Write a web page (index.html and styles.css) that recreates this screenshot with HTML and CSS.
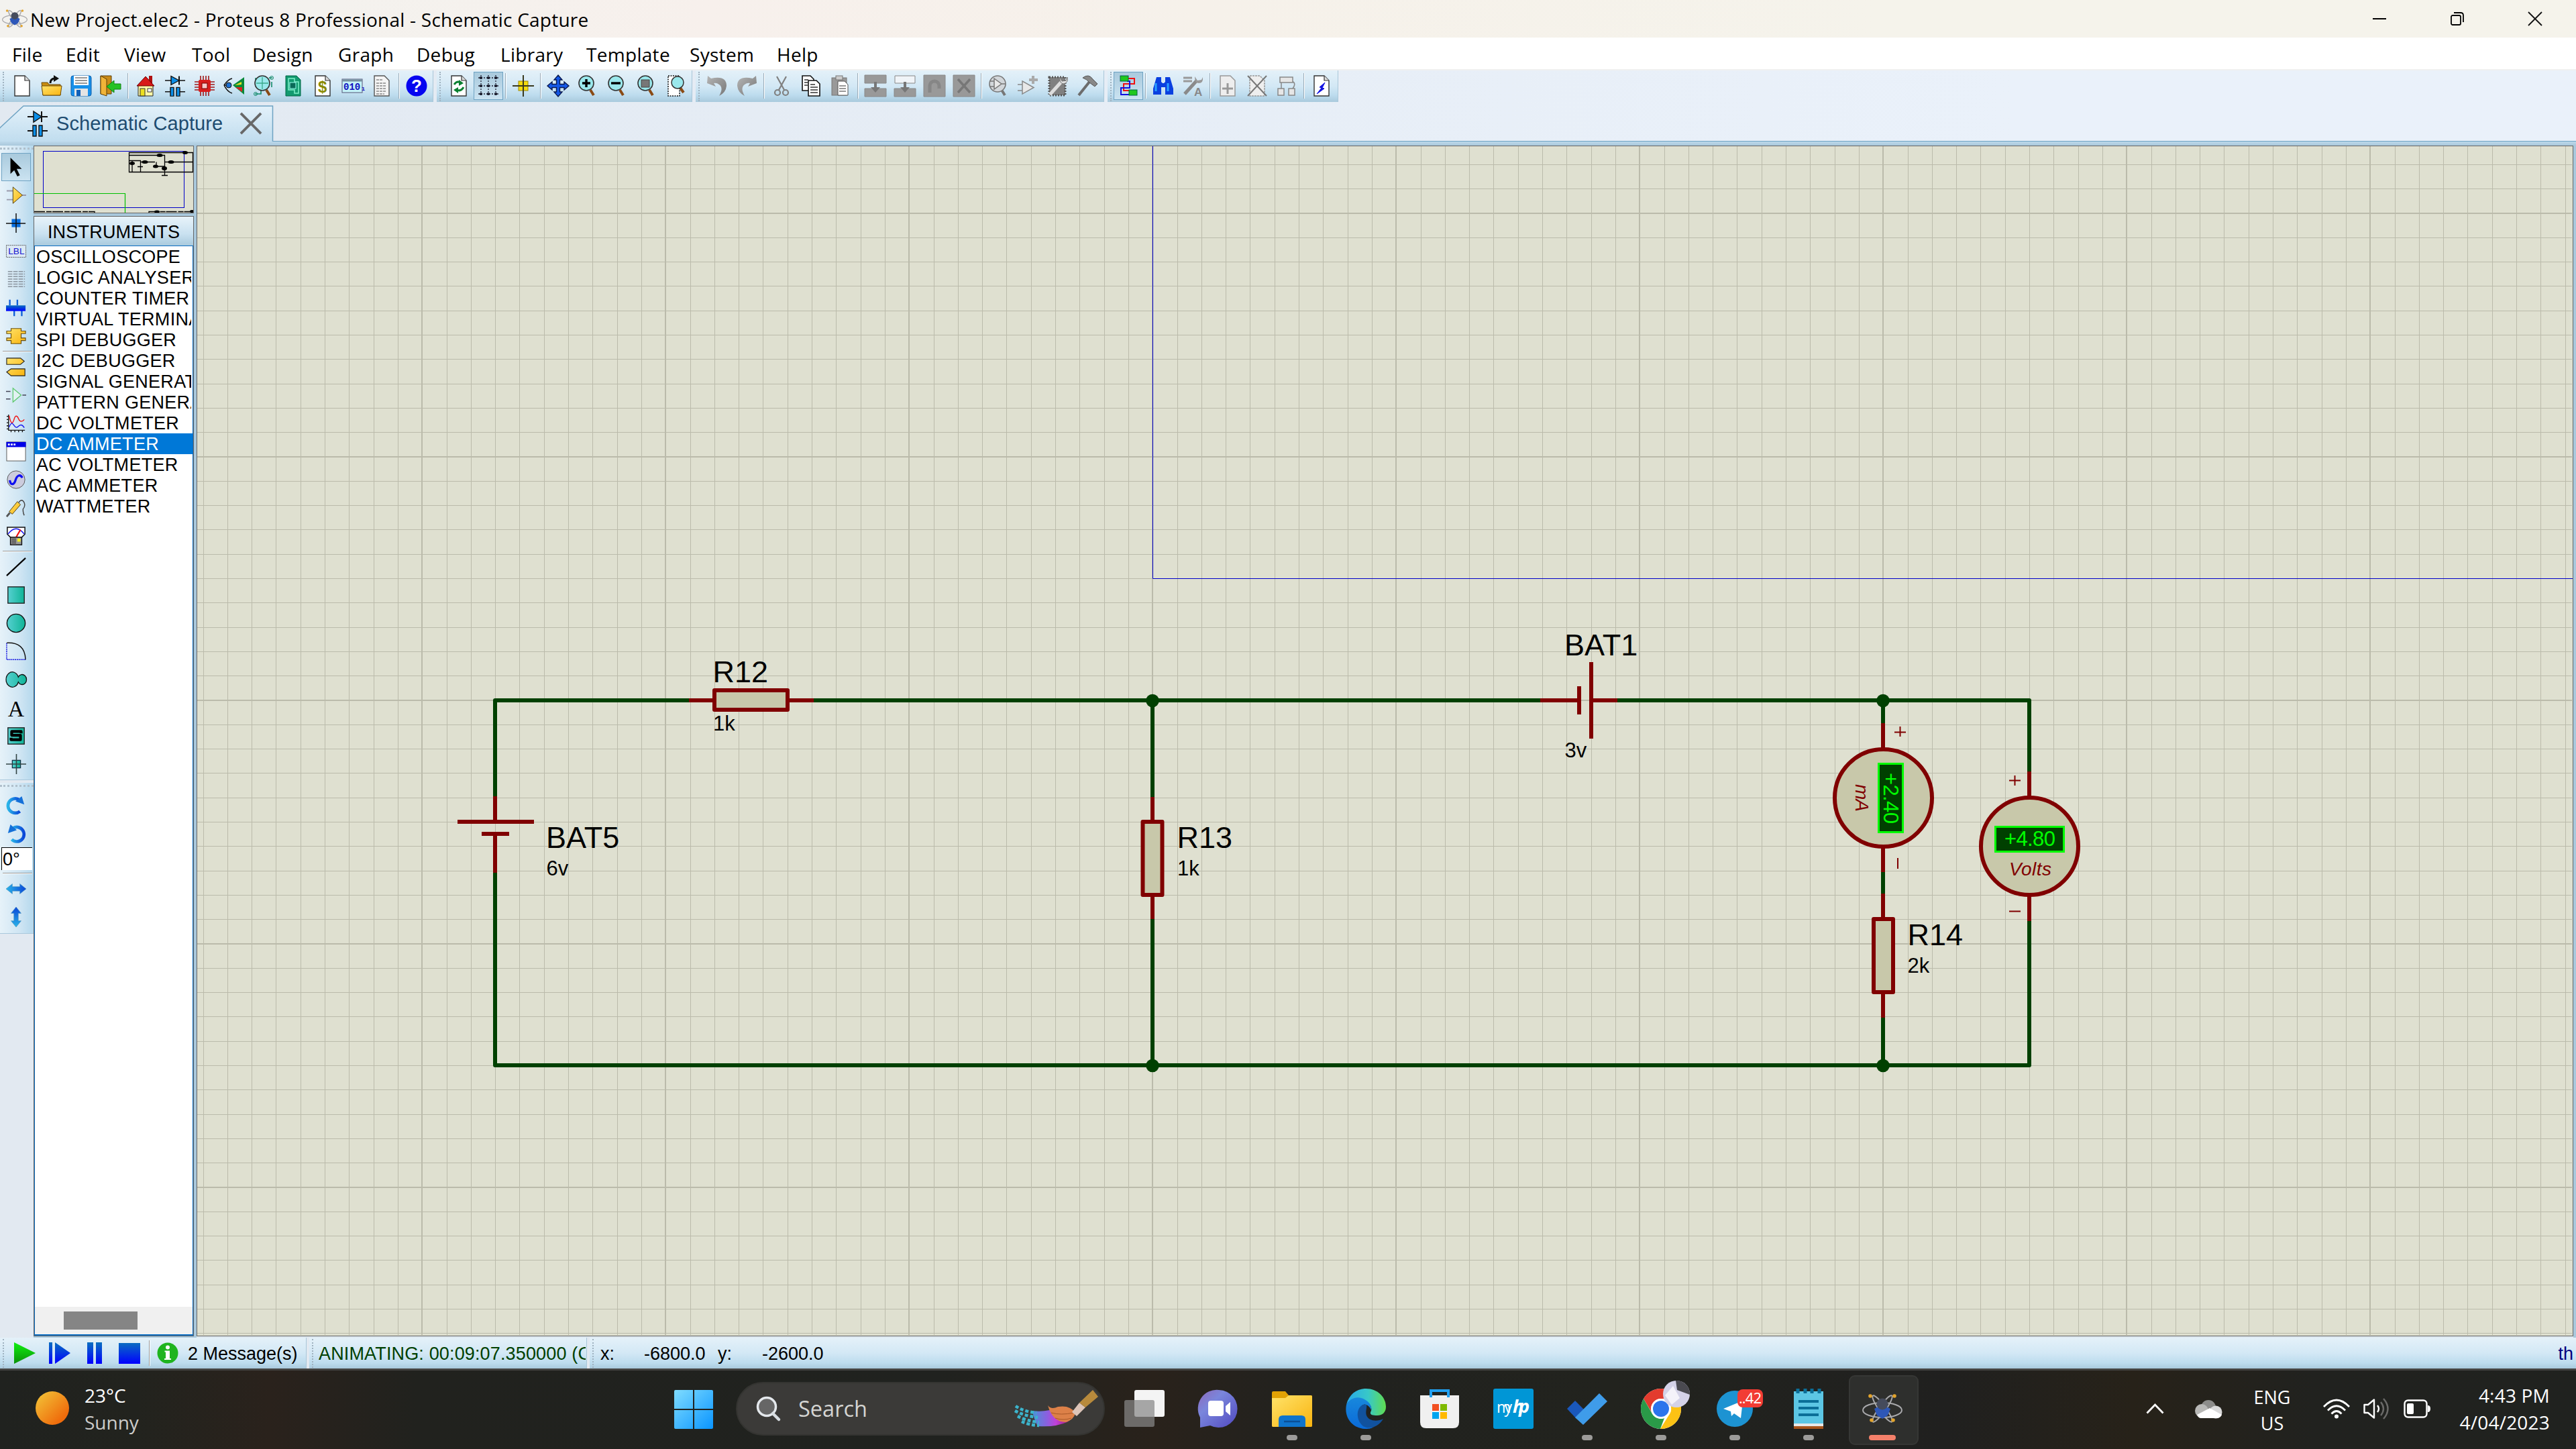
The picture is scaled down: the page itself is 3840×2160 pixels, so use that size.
FILE: index.html
```html
<!DOCTYPE html>
<html lang="en">
<head>
<meta charset="utf-8">
<title>New Project.elec2 - Proteus 8 Professional - Schematic Capture</title>
<link rel="stylesheet" href="styles.css">
</head>
<body>
<svg class="defs" width="0" height="0" aria-hidden="true">
  <defs>
    <linearGradient id="teal"><stop offset="0" stop-color="#56d0d0"/><stop offset="1" stop-color="#0fb497"/></linearGradient>
    <linearGradient id="gold" x2="1" y2="1"><stop offset="0" stop-color="#ffe36a"/><stop offset="1" stop-color="#f9b410"/></linearGradient>
    <linearGradient id="bluev" x2="0" y2="1"><stop offset="0" stop-color="#0a6fc0"/><stop offset="1" stop-color="#0000ff"/></linearGradient>
    <linearGradient id="blueh"><stop offset="0" stop-color="#2ab4e8"/><stop offset="1" stop-color="#0a46d8"/></linearGradient>
    <linearGradient id="bluev2" x2="0" y2="1"><stop offset="0" stop-color="#0a46d8"/><stop offset="1" stop-color="#2ab4e8"/></linearGradient>
    <linearGradient id="greenv" x2="0" y2="1"><stop offset="0" stop-color="#10f010"/><stop offset="1" stop-color="#0a900a"/></linearGradient>
    <linearGradient id="sun" x2="1" y2="1"><stop offset=".1" stop-color="#f2bd34"/><stop offset=".8" stop-color="#ef6c0c"/></linearGradient>
    <linearGradient id="win" x2="1" y2="1"><stop offset="0" stop-color="#7fdcff"/><stop offset="1" stop-color="#0a95ff"/></linearGradient>
    <linearGradient id="graymetal" x2="1" y2="1"><stop offset="0" stop-color="#b5b5b5"/><stop offset="1" stop-color="#777"/></linearGradient>
    <symbol id="page" viewBox="0 0 32 32"><path d="M5 1H20L27 8V31H5Z" fill="#fff" stroke="#333" stroke-width="1.4"/><path d="M20 1V8H27" fill="#ddd" stroke="#333" stroke-width="1.2"/></symbol>
    <symbol id="lens" viewBox="0 0 32 32"><path d="M20 22 25 30" stroke="#8a4a14" stroke-width="4"/><circle cx="14" cy="12" r="11" fill="#9ae8ec" stroke="#333" stroke-width="1.6"/></symbol>
    <symbol id="diode" viewBox="0 0 32 40"><path d="M1 10H31M22 2V18M1 31H10M22 31H31" stroke="#111" stroke-width="2"/><path d="M10 2 22 10 10 18Z" fill="#0a8ee8" stroke="#111" stroke-width="1.5"/><path d="M9 23H14V39H9ZM18 23H23V39H18Z" fill="#0a8ee8" stroke="#111" stroke-width="1.4"/></symbol>
    <symbol id="atom" viewBox="0 0 60 44"><g fill="none" stroke="#a9a9ac" stroke-width="2"><ellipse cx="30" cy="24" rx="29" ry="11"/><ellipse cx="30" cy="22" rx="5" ry="24" transform="rotate(-36 30 22)"/><ellipse cx="30" cy="22" rx="5" ry="24" transform="rotate(36 30 22)"/></g><path d="M18 22 30 16 42 22 38 32 30 37 22 32Z" fill="#2d57b8"/><circle cx="30" cy="15" r="8.500" fill="#454b5c"/><g fill="#e3a42c"><circle cx="12" cy="3" r="2.800"/><circle cx="48" cy="3" r="2.800"/><circle cx="14" cy="39" r="2.800"/><circle cx="46" cy="39" r="2.800"/></g></symbol>
  </defs>
</svg>

<header class="titlebar">
  <svg class="app-icon" viewBox="0 0 60 44"><use href="#atom"/></svg>
  <span class="title">New Project.elec2 - Proteus 8 Professional - Schematic Capture</span>
  <div class="win-buttons">
    <svg viewBox="0 0 20 20"><path d="M0 10H20" stroke="#000" stroke-width="2"/></svg>
    <svg viewBox="0 0 20 20" fill="none" stroke="#000" stroke-width="1.8"><rect x="1" y="5" width="14" height="14" rx="2"/><path d="M5 1H15Q19 1 19 5V15"/></svg>
    <svg viewBox="0 0 20 20"><path d="M0 0 20 20M20 0 0 20" stroke="#111" stroke-width="1.8"/></svg>
  </div>
</header>

<nav class="menubar">
  <span>File</span><span>Edit</span><span>View</span><span>Tool</span><span>Design</span><span>Graph</span><span>Debug</span><span>Library</span><span>Template</span><span>System</span><span>Help</span>
</nav>

<div class="toolbars">
  <div class="group">
    <i class="cell"><svg viewBox="0 0 32 32"><use href="#page"/></svg></i>
    <i class="cell"><svg viewBox="0 0 32 32"><path d="M1 11H10L12 14H29V30H3Z" fill="#c98c10" stroke="#6b4b08"/><path d="M1 16H31L29 30H3Z" fill="url(#gold)" stroke="#6b4b08"/><path d="M14 12Q14 5 21 5" fill="none" stroke="#111" stroke-width="3"/><path d="M19 0 27 5 19 10Z" fill="#111"/></svg></i>
    <i class="cell"><svg viewBox="0 0 32 32"><rect x="1" y="1" width="30" height="30" rx="3" fill="#1890ea" stroke="#0a5ca8"/><rect x="5" y="1" width="22" height="14" fill="#fff"/><path d="M7 4H25M7 8H25M7 12H25" stroke="#333" stroke-width="1.2"/><rect x="6" y="20" width="20" height="11" fill="#e4e4e4"/><rect x="9" y="22" width="6" height="9" fill="#1060b8"/></svg></i>
    <i class="cell"><svg viewBox="0 0 32 32"><path d="M1 1H17V28H1Z" fill="#c98a18" stroke="#5c3f08"/><path d="M1 1 10 6V31L1 28Z" fill="#f0b438" stroke="#5c3f08"/><path d="M10 17 21 8V13H31V21H21V26Z" fill="#25c225" stroke="#128012"/></svg></i>
    <b class="sep"></b>
    <i class="cell"><svg viewBox="0 0 32 32"><path d="M5 15H27V31H5Z" fill="#fff9a8" stroke="#222"/><path d="M21 1H26V14H21Z" fill="#b01010"/><path d="M3 16 16 2 29 16Z" fill="#d81818" stroke="#600"/><rect x="8" y="20" width="7" height="11" fill="#ece020" stroke="#333"/><rect x="19" y="20" width="6" height="5" fill="#fff" stroke="#333"/></svg></i>
    <i class="cell"><svg viewBox="0 0 32 40" preserveAspectRatio="none"><use href="#diode"/></svg></i>
    <i class="cell"><svg viewBox="0 0 32 32"><path d="M10 1V31M14 1V31M18 1V31M22 1V31M1 10H31M1 14H31M1 18H31M1 22H31" stroke="#a01818" stroke-width="1.6"/><rect x="7" y="7" width="18" height="18" rx="2" fill="#d81c1c"/><rect x="12" y="12" width="8" height="8" fill="#f8c8c8" stroke="#700"/></svg></i>
    <i class="cell"><svg viewBox="0 0 32 32"><path d="M14 15 31 3V29Z" fill="#0a8a3a"/><path d="M17 15 27 10V14Z" fill="#e8e020"/><path d="M18 18 28 18 28 25Z" fill="#e02020"/><path d="M1 15Q7 6 13 5M1 15Q6 25 13 27M1 15H4" fill="none" stroke="#111" stroke-width="1.6"/><circle cx="8" cy="15" r="4" fill="#1b6ed0" stroke="#111"/></svg></i>
    <i class="cell"><svg viewBox="0 0 32 32"><path d="M3 28H12V20M24 4H29M4 4V10M28 10V18" stroke="#128a6a" stroke-width="1.6" fill="none"/><circle cx="4" cy="28" r="2.5" fill="none" stroke="#128a6a"/><circle cx="28" cy="4" r="2.5" fill="none" stroke="#128a6a"/><use href="#lens"/><path d="M5 12H23M14 3V21" stroke="#3aa88a" stroke-width="1.3"/></svg></i>
    <i class="cell"><svg viewBox="0 0 32 32"><path d="M5 1H21L27 7V31H5Z" fill="#129a70" stroke="#064"/><path d="M9 5H18V10H24V27H18V22H9Z" fill="none" stroke="#7ff0c8" stroke-width="1.5"/><rect x="11" y="11" width="9" height="9" fill="#0a6a58" stroke="#9fe"/></svg></i>
    <i class="cell"><svg viewBox="0 0 32 32"><use href="#page"/><text x="9" y="26" class="t-dollar">$</text></svg></i>
    <i class="cell"><svg viewBox="0 0 32 32"><rect x="1" y="6" width="30" height="20" fill="#c4f2f8" stroke="#557"/><path d="M1 8H31" stroke="#7890a0" stroke-width="3"/><text x="3" y="22" class="t-bits">010₁</text></svg></i>
    <i class="cell"><svg viewBox="0 0 32 32"><path d="M5 1H20L27 8V31H5Z" fill="#f4f4f4" stroke="#555" stroke-width="1.4"/><path d="M8 7H17M8 12H23M8 16H23M8 20H23M8 24H23M8 28H20" stroke="#888" stroke-width="1.6" stroke-dasharray="4 1"/></svg></i>
    <b class="sep"></b>
    <i class="cell"><svg viewBox="0 0 32 32"><circle cx="16" cy="16" r="15.5" fill="#0505f0"/><text x="16" y="25" class="t-help">?</text></svg></i>
  </div>
  <div class="group">
    <i class="cell"><svg viewBox="0 0 32 32"><use href="#page"/><path d="M9 14Q13 8 18 11M23 18Q19 25 13 22" fill="none" stroke="#0a8030" stroke-width="3"/><path d="M16 7 23 12 16 16ZM15 18 8 22 15 27Z" fill="#0a8030"/></svg></i>
    <i class="cell pressed"><svg viewBox="0 0 32 32"><path d="M1 4H31M1 16H31M1 28H31M5 0V32M16 0V32M27 0V32" stroke="#223" stroke-width="1.3" stroke-dasharray="2 2"/><path d="M3 4H7M14 4H18M25 4H29M3 16H7M14 16H18M25 16H29M3 28H7M14 28H18M25 28H29" stroke="#112" stroke-width="3"/></svg></i>
    <b class="sep"></b>
    <i class="cell"><svg viewBox="0 0 32 32"><rect x="9" y="9" width="14" height="14" fill="#f4dc10" stroke="#a08800"/><path d="M0 16H32M16 0V32" stroke="#3a3a20" stroke-width="2"/></svg></i>
    <b class="sep"></b>
    <i class="cell"><svg viewBox="0 0 32 32"><path d="M16 0 22 7H18.500V13.500H25V10L32 16 25 22V18.500H18.500V25H22L16 32 10 25H13.500V18.500H7V22L0 16 7 10V13.500H13.500V7H10Z" fill="#1458e8" stroke="#0a1a50" stroke-width="1.4"/></svg></i>
    <i class="cell"><svg viewBox="0 0 32 32"><use href="#lens"/><path d="M8 12H20M14 6V18" stroke="#000" stroke-width="3.4"/></svg></i>
    <i class="cell"><svg viewBox="0 0 32 32"><use href="#lens"/><path d="M7 12H21" stroke="#000" stroke-width="3.4"/></svg></i>
    <i class="cell"><svg viewBox="0 0 32 32"><use href="#lens"/><rect x="8" y="7" width="12" height="11" fill="#777" stroke="#444"/></svg></i>
    <i class="cell"><svg viewBox="0 0 32 32"><path d="M4 1H21V31H4Z" fill="#fff" stroke="#111" stroke-width="1.5" stroke-dasharray="2 1.500"/><path d="M22 19 27 26" stroke="#8a4a14" stroke-width="4"/><circle cx="18" cy="11" r="9" fill="#9ae8ec" stroke="#333" stroke-width="1.500"/></svg></i>
  </div>
  <div class="group">
    <i class="cell"><svg viewBox="0 0 32 32"><path d="M1 12 2 1 7 5Q30 0 30 16 29 26 19 31 26 19 19 14 15 11 11 12L14 17Z" fill="url(#graymetal)"/></svg></i>
    <i class="cell"><svg viewBox="0 0 32 32"><path d="M31 12 30 1 25 5Q2 0 2 16 3 26 13 31 6 19 13 14 17 11 21 12L18 17Z" fill="url(#graymetal)"/></svg></i>
    <b class="sep"></b>
    <i class="cell"><svg viewBox="0 0 32 32" fill="none" stroke="#808080" stroke-width="2.200"><path d="M9 2 20 22M23 2 12 22"/><circle cx="10" cy="26" r="4"/><circle cx="22" cy="26" r="4"/></svg></i>
    <i class="cell"><svg viewBox="0 0 32 32"><path d="M3 1H15L20 6V23H3Z" fill="#fff" stroke="#111" stroke-width="1.600"/><path d="M12 8H24L29 13V31H12Z" fill="#fff" stroke="#111" stroke-width="1.600"/><path d="M6 7H12M6 11H11M6 15H11M15 14H22M15 18H26M15 22H26M15 26H26" stroke="#333" stroke-width="1.500"/></svg></i>
    <i class="cell"><svg viewBox="0 0 32 32"><rect x="3" y="4" width="22" height="26" fill="#999" stroke="#777"/><rect x="9" y="1" width="10" height="6" fill="#ccc" stroke="#777"/><path d="M12 9H22L27 14V30H12Z" fill="#fff" stroke="#555"/><path d="M14 16H24M14 20H24M14 24H24" stroke="#777" stroke-width="1.400"/></svg></i>
    <b class="sep"></b>
    <i class="cell"><svg viewBox="0 0 32 32"><path d="M0 0H32V12H0ZM0 20H32V32H0Z" fill="#999" stroke="#888"/><path d="M14 10H18V18H23L16 26 9 18H14Z" fill="#777"/></svg></i>
    <i class="cell"><svg viewBox="0 0 32 32"><path d="M1 1H31V12H1Z" fill="#f0f4f8" stroke="#888"/><path d="M0 20H32V32H0Z" fill="#999" stroke="#888"/><path d="M14 10H18V18H23L16 26 9 18H14Z" fill="#777"/></svg></i>
    <i class="cell"><svg viewBox="0 0 32 32"><path d="M0 0H32V32H0Z" fill="#999" stroke="#888"/><path d="M9 26V16A7 7 0 0 1 23 16V20" fill="none" stroke="#868686" stroke-width="5"/></svg></i>
    <i class="cell"><svg viewBox="0 0 32 32"><path d="M0 0H32V32H0Z" fill="#999" stroke="#888"/><path d="M7 6 25 26M25 6 7 26" stroke="#777" stroke-width="3.500"/></svg></i>
    <b class="sep"></b>
    <i class="cell"><svg viewBox="0 0 32 32"><path d="M20 22 25 30" stroke="#777" stroke-width="4"/><circle cx="14" cy="13" r="12" fill="#d2d6da" stroke="#777" stroke-width="1.600"/><path d="M3 9H9M3 17H9M20 13H26M9 5 20 13 9 21Z" fill="#e8e8e8" stroke="#777" stroke-width="1.500"/></svg></i>
    <i class="cell"><svg viewBox="0 0 32 32"><path d="M0 14H7M0 23H7M7 9 24 18.500 7 28Z" fill="#e8e8e8" stroke="#888" stroke-width="1.500"/><path d="M23 1V13M17 7H30" stroke="#aaa" stroke-width="4"/></svg></i>
    <i class="cell"><svg viewBox="0 0 32 32"><path d="M3 3H27V30H3Z" fill="#808080" stroke="#555" stroke-dasharray="2 2" stroke-width="3"/><path d="M4 29 22 9" stroke="#ddd" stroke-width="5"/><path d="M19 3 22 9 28 8 30 3Q32 12 24 13 18 12 19 3" fill="#ddd" stroke="#777"/></svg></i>
    <i class="cell"><svg viewBox="0 0 32 32"><path d="M3 30 19 10" stroke="#6c6c6c" stroke-width="4"/><path d="M9 4Q18 -3 24 6L31 13 27 17 19 11Q15 6 9 4Z" fill="#888" stroke="#555"/></svg></i>
  </div>
  <div class="group last">
    <i class="cell pressed"><svg viewBox="0 0 32 32"><path d="M14 5H25V13H9V23H18" fill="none" stroke="#f01010" stroke-width="2"/><path d="M14 9H18V19H5V29H18" fill="none" stroke="#1010e0" stroke-width="2"/><rect x="4" y="1" width="12" height="8" fill="#1fc81f" stroke="#064"/><rect x="17" y="22" width="12" height="8" fill="#1fc81f" stroke="#064"/></svg></i>
    <b class="sep"></b>
    <i class="cell"><svg viewBox="0 0 32 32"><path d="M6 3H13V10L15 12H17L19 10V3H26L31 20V29H19V18H13V29H1V20Z" fill="#0a40e0"/><path d="M5 12V24M23 12V24" stroke="#2aa0ff" stroke-width="3"/></svg></i>
    <i class="cell"><svg viewBox="0 0 32 32"><path d="M2 4H15M2 9H15" stroke="#999" stroke-width="3"/><path d="M4 28 22 8" stroke="#8a8a8a" stroke-width="5"/><path d="M19 2 23 8 29 7 31 3Q32 12 25 12 19 12 19 2" fill="#999"/><text x="18" y="31" class="t-tag">A</text></svg></i>
    <b class="sep"></b>
    <i class="cell"><svg viewBox="0 0 32 32"><path d="M5 1H20L27 8V31H5Z" fill="#eee" stroke="#999" stroke-width="1.500"/><path d="M16 12V28M8 20H24" stroke="#999" stroke-width="3"/></svg></i>
    <i class="cell"><svg viewBox="0 0 32 32"><path d="M5 1H20L27 8V31H5Z" fill="#eee" stroke="#999" stroke-width="1.500" stroke-dasharray="3 1"/><path d="M2 1 30 31M30 1 2 31" stroke="#777" stroke-width="2"/></svg></i>
    <i class="cell"><svg viewBox="0 0 32 32" fill="#e6e6e6" stroke="#888" stroke-width="1.500"><path d="M8 10V20M24 9Q31 12 25 20" fill="none"/><rect x="6" y="3" width="19" height="8"/><rect x="3" y="20" width="9" height="10"/><rect x="19" y="20" width="9" height="10"/></svg></i>
    <b class="sep"></b>
    <i class="cell"><svg viewBox="0 0 32 32"><use href="#page"/><path d="M21 11 13 18 16 19 9 28 20 20 17 19Z" fill="#1010e0" stroke="#1010e0"/></svg></i>
  </div>
</div>

<div class="tabs">
  <div class="tab">
    <svg class="tab-shape" viewBox="0 0 408 58"><defs><linearGradient id="tabfill" x2="0" y2="1"><stop offset="0" stop-color="#e3f1fa"/><stop offset="1" stop-color="#bfdcee"/></linearGradient></defs><path d="M-4 60V44L0 38 35 5.500H406.500V60Z" fill="url(#tabfill)" stroke="#6fa3c3" stroke-width="1.500"/></svg>
    <svg class="tab-icon" viewBox="0 0 32 40"><use href="#diode"/></svg>
    <span class="tab-label">Schematic Capture</span>
    <svg class="tab-close" viewBox="0 0 33 33"><path d="M1 1 32 32M32 1 1 32" stroke="#686868" stroke-width="4"/></svg>
  </div>
</div>
<div class="band"></div>

<main class="work">
  <aside class="toolbox">
    <div class="tools main-tools">
      <i class="tool pressed"><svg viewBox="0 0 32 32"><path d="M7 1V27L13 21 18 31 22 29 17 19H25Z" fill="#000"/></svg></i>
      <i class="tool"><svg viewBox="0 0 32 32"><path d="M1 9H11M1 23H11M25 16H32" stroke="#99a" stroke-width="2"/><path d="M11 3 26 16 11 29Z" fill="url(#gold)" stroke="#4c3a10"/></svg></i>
      <i class="tool"><svg viewBox="0 0 32 32"><rect x="9" y="9" width="14" height="13" fill="#0a6fe0"/><path d="M0 16H31M16 0V31" stroke="#111" stroke-width="1.600"/></svg></i>
      <i class="tool"><svg viewBox="0 0 32 32"><rect x="0.500" y="6" width="31" height="19" fill="#dce9f4" stroke="#555" stroke-dasharray="2 1"/><text x="3.500" y="20.500" class="t-lbl">LBL</text></svg></i>
      <i class="tool"><svg viewBox="0 0 32 32"><path d="M3 3H30M3 7H30M3 11H30M3 15H30M3 19H30M3 23H30M3 27H30" stroke="#8a949e" stroke-width="1.500" stroke-dasharray="7 1.500"/></svg></i>
      <i class="tool"><svg viewBox="0 0 32 32"><path d="M6 3V12M18 3V12M13 20V29M25 20V29" stroke="#1060d8" stroke-width="2.500"/><rect x="0" y="12" width="31" height="9" fill="url(#bluev)"/></svg></i>
      <i class="tool"><svg viewBox="0 0 32 32"><path d="M8 4H24V8H31V12H24V19H31V23H24V28H8V23H1V19H8V12H1V8H8Z" fill="url(#gold)" stroke="#6a5010" stroke-width="1.200"/></svg></i>
      <b class="hsep"></b>
      <i class="tool"><svg viewBox="0 0 32 32"><path d="M1 2H23L29 7 23 12H1ZM30 19H8L1 24 8 30H30Z" fill="url(#gold)" stroke="#222" stroke-width="1.200"/></svg></i>
      <i class="tool"><svg viewBox="0 0 32 32"><path d="M0 10H7M0 22H7M26 16H32" stroke="#445" stroke-width="1.600"/><path d="M11 5 24 16 11 27Z" fill="#e2f2f2" stroke="#5cc86c" stroke-width="1.300"/></svg></i>
      <i class="tool"><svg viewBox="0 0 32 32" fill="none"><path d="M4 2V27H30M1 5H4M1 10H4M1 15H4M1 20H4M1 25H4M8 27V30M14 27V30M20 27V30M26 27V30" stroke="#111" stroke-width="1.400"/><path d="M5 4C8 20 11 16 13 9S18 4 20 9 26 14 29 10" stroke="#f01818" stroke-width="1.500"/><path d="M5 22C9 12 11 17 14 21S20 20 22 19 26 18 29 23" stroke="#1818f0" stroke-width="1.500"/></svg></i>
      <i class="tool"><svg viewBox="0 0 32 32"><rect x="1" y="1" width="30" height="30" fill="#fff" stroke="#555"/><rect x="0.500" y="1" width="31" height="8" fill="#0000e8"/><path d="M3 5H15" stroke="#fff" stroke-width="3" stroke-dasharray="3 1.500"/></svg></i>
      <i class="tool"><svg viewBox="0 0 32 32"><circle cx="16" cy="16" r="14" fill="#ccd" stroke="#555"/><path d="M6 17C7 26 13 24 15 17S22 6 26 13" fill="none" stroke="#1010f0" stroke-width="3.500"/></svg></i>
      <i class="tool"><svg viewBox="0 0 32 32"><path d="M1 30 6 24" stroke="#555" stroke-width="3"/><path d="M5 22 18 6 23 11 10 26Z" fill="url(#gold)" stroke="#4c3a10"/><path d="M20 8Q25 0 29 8 31 14 27 18 27 25 29 28" fill="none" stroke="#444" stroke-width="1.500"/></svg></i>
      <i class="tool"><svg viewBox="0 0 32 32"><path d="M2 2H30V13L25 18H7L2 13Z" fill="#fff" stroke="#111" stroke-width="1.600"/><path d="M3 13Q16 -4 29 13" fill="none" stroke="#1010f0" stroke-width="1.500"/><path d="M16 18 23 6" stroke="#f01010" stroke-width="2.200"/><rect x="7" y="18" width="18" height="12" fill="#999" stroke="#111" stroke-width="1.500"/><path d="M9 21H16M9 24H16M9 27H16" stroke="#111"/><rect x="18" y="20" width="5" height="5" fill="#f4f020"/></svg></i>
      <b class="hsep"></b>
      <i class="tool"><svg viewBox="0 0 32 32"><path d="M1 30 31 2" stroke="#000" stroke-width="2.200"/></svg></i>
      <i class="tool"><svg viewBox="0 0 32 32"><rect x="3" y="3" width="26" height="26" fill="url(#teal)" stroke="#222" stroke-width="1.500"/></svg></i>
      <i class="tool"><svg viewBox="0 0 32 32"><circle cx="16" cy="16" r="14.500" fill="url(#teal)" stroke="#111" stroke-width="1.500"/></svg></i>
      <i class="tool"><svg viewBox="0 0 32 32"><path d="M1 3V29H31" fill="none" stroke="#1010e0" stroke-width="1.500" stroke-dasharray="2 1"/><path d="M1 2.500Q30 1 31 29" fill="none" stroke="#111" stroke-width="1.500"/></svg></i>
      <i class="tool"><svg viewBox="0 0 32 32"><path d="M19.500 12A7 8 0 1 1 19.500 20A10 12 0 1 1 19.500 12Z" fill="url(#teal)" stroke="#111" stroke-width="1.400"/></svg></i>
      <i class="tool"><svg viewBox="0 0 32 32"><text x="16" y="30" class="t-serif">A</text></svg></i>
      <i class="tool"><svg viewBox="0 0 32 32"><rect x="3" y="3" width="26" height="26" fill="url(#teal)" stroke="#222" stroke-width="1.500"/><path d="M24 12V9H9V15H23V22H8V19" fill="none" stroke="#000" stroke-width="4.500" stroke-linejoin="round"/></svg></i>
      <i class="tool"><svg viewBox="0 0 32 32"><rect x="10" y="10" width="13" height="12" fill="url(#teal)" stroke="#134" stroke-width="1.400"/><path d="M0 16H32M16.500 0V32" stroke="#344" stroke-width="1.700"/></svg></i>
    </div>
    <div class="tools rot-tools">
      <i class="tool"><svg viewBox="0 0 32 32"><path d="M22 25A11.500 11.500 0 1 1 20 6" fill="none" stroke="url(#blueh)" stroke-width="5"/><path d="M15 9 25 1 29 14Z" fill="#1470d8"/></svg></i>
      <i class="tool"><svg viewBox="0 0 32 32"><path d="M9 25A11.500 11.500 0 1 0 11 7" fill="none" stroke="url(#blueh)" stroke-width="5"/><path d="M7 1 17 10 3 15Z" fill="#1470d8"/></svg></i>
      <span class="angle">0°</span>
      <b class="hsep"></b>
      <i class="tool"><svg viewBox="0 0 32 32"><path d="M0 16 10 8V12.500H22V8L32 16 22 24V19.500H10V24Z" fill="url(#blueh)" stroke="#4a90b8" stroke-width=".6"/></svg></i>
      <i class="tool"><svg viewBox="0 0 32 32"><path d="M16 0 24 10H19.500V22H24L16 32 8 22H12.500V10H8Z" fill="url(#bluev2)" stroke="#4a90b8" stroke-width=".6"/></svg></i>
    </div>
  </aside>

  <aside class="side">
    <svg class="overview" viewBox="51 218 237 99" fill="none">
      <rect x="64.500" y="225.500" width="210" height="84" stroke="#0000c8"/>
      <path d="M51 288.500H186.500V317" stroke="#00c000" stroke-width="1.200"/>
      <g stroke="#000" stroke-width="1.300">
        <path d="M192.500 227.500H287.500V256.500H192.500ZM192.500 231.500H245.500V239M192.500 239.500H210M210 241.500H231M245 241.500H287M233 241.500V248H245M245.500 238V261M241 261.500H250M209.500 239V256M205 248.500H213M197 240V256"/>
        <path d="M51 315.500H141V317M222 317V315.500H287" stroke-dasharray="16 2 8 1"/>
      </g>
      <g fill="#000"><ellipse cx="276" cy="227.500" rx="4" ry="2.500"/><ellipse cx="238" cy="231.500" rx="4.500" ry="2.500"/><ellipse cx="216" cy="241.500" rx="4.500" ry="2.500"/><ellipse cx="255" cy="241.500" rx="4.500" ry="2.500"/><ellipse cx="197" cy="243.500" rx="4" ry="2.500"/><ellipse cx="232" cy="248" rx="4" ry="2.500"/><ellipse cx="245" cy="251" rx="4" ry="3"/><ellipse cx="234" cy="315.500" rx="4" ry="2"/><ellipse cx="286" cy="315" rx="3" ry="2"/></g>
    </svg>
    <div class="selector">
      <div class="selector-head">INSTRUMENTS</div>
      <ul class="devices">
        <li>OSCILLOSCOPE</li><li>LOGIC ANALYSER</li><li>COUNTER TIMER</li><li>VIRTUAL TERMINAL</li><li>SPI DEBUGGER</li><li>I2C DEBUGGER</li><li>SIGNAL GENERATOR</li><li>PATTERN GENERATOR</li><li>DC VOLTMETER</li><li class="selected">DC AMMETER</li><li>AC VOLTMETER</li><li>AC AMMETER</li><li>WATTMETER</li>
      </ul>
      <div class="hscroll"><div class="thumb"></div></div>
    </div>
  </aside>

  <section class="editor">
    <svg class="sheet" viewBox="294 218 3541 1773">
      <defs>
        <pattern id="grid" patternUnits="userSpaceOnUse" x="2443" y="1043" width="363" height="363">
          <g fill="#bbbbab" shape-rendering="crispEdges">
            <path d="M0 0h2v363h-2zM38 0h1v363h-1zM74 0h1v363h-1zM110 0h1v363h-1zM146 0h1v363h-1zM183 0h1v363h-1zM219 0h1v363h-1zM255 0h1v363h-1zM292 0h1v363h-1zM328 0h1v363h-1z"/>
            <path d="M0 0v2h363v-2zM0 37v1h363v-1zM0 73v1h363v-1zM0 109v1h363v-1zM0 146v1h363v-1zM0 182v1h363v-1zM0 218v1h363v-1zM0 255v1h363v-1zM0 291v1h363v-1zM0 327v1h363v-1z"/>
          </g>
        </pattern>
      </defs>
      <rect x="294" y="218" width="3540" height="1772" fill="url(#grid)"/>
      <path class="border" d="M1718.500 218V862.500H3835"/>

      <g class="wire">
        <path d="M1027 1044H738V1187M738 1300V1588H3025V1373M1213 1044H2296M2411 1044H3025V1150M1718 1044V1188M1718 1370V1588M2807 1044V1078M2807 1300V1332M2807 1517V1588"/>
      </g>
      <g class="part">
        <path d="M1027 1044H1065M1174 1044H1213M738 1187V1225M682 1225H796M718 1243H759M738 1243V1301M1718 1188V1225M1718 1334V1370M2296 1044H2354M2354 1023V1065M2372 987V1101M2372 1044H2411M2807 1078V1117M2807 1262V1300M2807 1332V1370M2807 1479V1517M3025 1150V1189M3025 1334V1373"/>
        <rect x="1065" y="1029" width="109" height="29"/>
        <rect x="1703.500" y="1225" width="29" height="109"/>
        <rect x="2793" y="1370" width="29" height="109"/>
        <circle cx="2807.500" cy="1189.500" r="72.500"/>
        <circle cx="3025.500" cy="1261.500" r="72.500"/>
      </g>
      <g class="node"><circle cx="1718" cy="1044.500" r="9.800"/><circle cx="2807" cy="1044.500" r="9.800"/><circle cx="1718" cy="1588.500" r="9.800"/><circle cx="2807" cy="1588.500" r="9.800"/></g>
      <path class="sign" d="M2824 1091.500H2841M2832.500 1083V1098M2829 1279V1295M2995 1163.500H3012M3003.500 1156V1171M2995 1358.500H3012"/>

      <rect class="lcd" x="2800.500" y="1138.500" width="36" height="102"/>
      <rect class="lcd" x="2974.500" y="1232.500" width="102" height="37"/>
      <text class="lcd-text" transform="translate(2807.500 1152) rotate(90)" textLength="76">+2.40</text>
      <text class="lcd-text" x="2988" y="1260.500" textLength="76">+4.80</text>
      <text class="unit" transform="translate(2765.500 1169) rotate(90)" textLength="41">mA</text>
      <text class="unit" x="2995" y="1304.500" textLength="63">Volts</text>

      <g class="ref">
        <text x="1062.500" y="1017">R12</text><text x="814" y="1264">BAT5</text><text x="1754.500" y="1264">R13</text><text x="2332" y="977">BAT1</text><text x="2843.500" y="1409">R14</text>
      </g>
      <g class="val">
        <text x="1063" y="1088.500">1k</text><text x="814.500" y="1304.500">6v</text><text x="1755" y="1304.500">1k</text><text x="2332.500" y="1128.500">3v</text><text x="2843.500" y="1450">2k</text>
      </g>
    </svg>
  </section>
</main>

<footer class="status">
  <div class="sgroup sim">
    <svg class="sim-icons" viewBox="0 0 220 46"><path d="M21 7 53 23 21 39Z" fill="url(#greenv)"/><path d="M73 7H78V39H73ZM82 7 105 23 82 39ZM130 7H139V39H130ZM143 7H152V39H143ZM177 8H209V39H177Z" fill="url(#bluev)"/></svg>
    <b class="ssep"></b>
    <svg class="info" viewBox="0 0 32 32"><circle cx="16" cy="16" r="15.500" fill="#1fb41f"/><path d="M16 4.500a3 3 0 1 1 0 6 3 3 0 0 1 0-6M11.500 12.500H19V24H21V26H11V24H13V14.500H11.500Z" fill="#fff"/></svg>
    <span>2 Message(s)</span>
  </div>
  <div class="sgroup anim"><span>ANIMATING: 00:09:07.350000 (C</span></div>
  <div class="sgroup coords"><span class="c1">x:</span><span class="c2">-6800.0</span><span class="c3">y:</span><span class="c4">-2600.0</span><span class="th">th</span></div>
</footer>

<div class="taskbar">
  <div class="weather">
    <svg viewBox="0 0 50 50"><circle cx="25" cy="25" r="25" fill="url(#sun)"/></svg>
    <div class="lines"><span>23°C</span><span class="dim">Sunny</span></div>
  </div>
  <svg class="start" viewBox="0 0 58 58"><path d="M2 0H28V28H0V2Q0 0 2 0ZM30 0H56Q58 0 58 2V28H30ZM0 30H28V58H2Q0 58 0 56ZM30 30H58V56Q58 58 56 58H30Z" fill="url(#win)"/></svg>
  <div class="search">
    <svg class="mag" viewBox="0 0 36 36"><circle cx="16" cy="15" r="13.500" fill="#666" stroke="#e4e8ec" stroke-width="3.500"/><path d="M25 25 34 34" stroke="#d8dde2" stroke-width="4.500" stroke-linecap="round"/></svg>
    <span>Search</span>
    <svg class="brush" viewBox="0 0 126 56"><defs><linearGradient id="paint"><stop offset="0" stop-color="#4a90d8"/><stop offset=".4" stop-color="#8a60e0"/><stop offset=".65" stop-color="#c040d8"/><stop offset="1" stop-color="#a02080"/></linearGradient></defs><path d="M28 31Q40 33 54 30L82 47Q62 56 36 54Q30 44 28 31Z" fill="url(#paint)"/><path d="M3 24Q14 32 34 34M2 31Q14 38 36 41M6 39Q18 46 38 48M12 47Q22 52 38 53" fill="none" stroke="#3cb4cc" stroke-width="4.500" stroke-dasharray="5 3"/><path d="M51 23Q56 30 66 25 84 22 92 34 90 44 78 48 58 48 51 23Z" fill="#dc8048"/><path d="M56 34Q70 38 90 34M62 42Q74 46 86 42" stroke="#a85828" fill="none"/><path d="M87 33 98 19 107 26 94 39Z" fill="#dcc4b8"/><path d="M98 19 118 0 126 10 107 26Z" fill="#b88a3c"/></svg>
  </div>
  <div class="apps">
    <div class="app"><svg viewBox="0 0 60 60"><rect x="15" y="2" width="45" height="40" rx="3" fill="#f4f4f4"/><rect x="0" y="17" width="45" height="40" rx="3" fill="#888" fill-opacity=".72"/></svg></div>
    <div class="app"><svg viewBox="0 0 60 60"><defs><linearGradient id="chat" x2="1" y2="1"><stop offset="0" stop-color="#8e68b8"/><stop offset=".35" stop-color="#7a86dc"/><stop offset="1" stop-color="#5048c0"/></linearGradient></defs><path d="M31 2A28 28 0 1 1 18 55L3 58V43A28 28 0 0 1 31 2Z" fill="url(#chat)"/><rect x="15" y="18" width="23" height="23" rx="4" fill="#fff"/><path d="M41 26 48 20V40L41 34Z" fill="#fff"/></svg></div>
    <div class="app run"><svg viewBox="0 0 60 60"><path d="M0 6Q0 4 2 4H20L25 10H58Q60 10 60 12V55Q60 57 58 57H2Q0 57 0 55Z" fill="#e2a204"/><path d="M0 14H20L25 10H58Q60 10 60 12V55Q60 57 58 57H2Q0 57 0 55Z" fill="url(#gold)"/><path d="M10 57V46Q10 40 16 40H44Q50 40 50 46V57Z" fill="#0f74cc"/><path d="M18 49H42" stroke="#0a4f96" stroke-width="2.500"/></svg></div>
    <div class="app run"><svg viewBox="0 0 60 60"><defs><linearGradient id="eg"><stop offset="0" stop-color="#28a8e8"/><stop offset=".55" stop-color="#38c8c8"/><stop offset="1" stop-color="#60dc50"/></linearGradient><linearGradient id="eb" x2="0" y2="1"><stop offset="0" stop-color="#1888dc"/><stop offset="1" stop-color="#0a6ad8"/></linearGradient></defs><path d="M1 24C5 8 17 0 30 0 48 0 60 13 60 27 60 36 54 40 47 40 38 40 35 38 38 33 40 26 34 20 26 16 16 12 6 16 1 24Z" fill="url(#eg)"/><path d="M1 24C6 14 18 10 28 16 36 20 39 27 38 32 36 26 30 22 26 24 16 30 18 46 28 54 34 58 40 58 42 57 38 60 32 60 30 60 12 60 -3 45 1 24Z" fill="url(#eb)"/><path d="M26 24C16 28 14 46 26 56 36 62 50 56 56 45 46 50 34 48 31 40 29 34 32 30 31 24Z" fill="#11529e"/></svg></div>
    <div class="app"><svg viewBox="0 0 60 60"><path d="M1 10H59V50Q59 59 50 59H10Q1 59 1 50Z" fill="#f0f0f0"/><path d="M17 13V3H43V13" fill="none" stroke="#22a0f0" stroke-width="4"/><path d="M19 23H29V33H19Z" fill="#f25022"/><path d="M31 23H41V33H31Z" fill="#7fba00"/><path d="M19 35H29V45H19Z" fill="#00a4ef"/><path d="M31 35H41V45H31Z" fill="#ffb900"/></svg></div>
    <div class="app"><svg viewBox="0 0 60 60"><rect width="60" height="60" rx="3" fill="#0096d6"/><text x="5" y="36" class="t-my" textLength="23">my</text><text x="29" y="36" class="t-hp" textLength="25">hp</text></svg></div>
    <div class="app run"><svg viewBox="0 0 60 60"><path d="M0 30 12 18 28 34 21 45Q17 48 13 44Z" fill="#1a58bc"/><path d="M12 43 48 7 60 19 24 54Z" fill="#3f9cea"/></svg></div>
    <div class="app run"><svg class="wide" viewBox="0 0 76 76"><g transform="translate(8 8)"><circle cx="30" cy="30" r="30" fill="#fff"/><path d="M30 0A30 30 0 0 1 56 15H30A15 15 0 0 0 17 37L4 15A30 30 0 0 1 30 0Z" fill="#e33b2e"/><path d="M4 15 17 37.500A15 15 0 0 0 35 44L29 60A30 30 0 0 1 4 15Z" fill="#2a9a48"/><path d="M56 15A30 30 0 0 1 29 60L43 37.500A15 15 0 0 0 38 17V15Z" fill="#fcc214"/><circle cx="30" cy="30" r="15" fill="#fff"/><circle cx="30" cy="30" r="12" fill="#2c74ec"/><circle cx="53" cy="8" r="20" fill="#d4d2e8"/><path d="M52 -12A20 20 0 0 1 73 9L54 2Z" fill="#4a4a50"/><path d="M36 10 48 -4 58 14 46 24Z" fill="#f4f2fa"/></g></svg></div>
    <div class="app run"><svg class="wide" viewBox="0 0 76 76"><g transform="translate(8 8)"><circle cx="30" cy="30" r="27" fill="#1d93d2"/><path d="M13 30 42 18 39 44 29 37 25 41 24 34Z" fill="#fff"/><rect x="34" y="1" width="38" height="27" rx="8" fill="#f23c34"/><text x="36" y="22" class="t-badge" textLength="34">..42</text></g></svg></div>
    <div class="app run"><svg viewBox="0 0 60 60"><rect x="8" y="4" width="44" height="52" fill="#5cc6e4"/><path d="M8 52H52V56H8Z" fill="#e8e8e8"/><path d="M8 56H52V60H8Z" fill="#a8541a"/><path d="M14 0V7M25 0V7M35 0V7M46 0V7" stroke="#0b6e98" stroke-width="5"/><path d="M15 19H45M15 29H45M15 39H45" stroke="#0b6e98" stroke-width="4"/></svg></div>
    <div class="app active"><svg viewBox="0 0 60 60"><use href="#atom" x="0" y="8" width="60" height="44"/></svg></div>
  </div>
  <div class="tray">
    <svg class="chev" viewBox="0 0 27 16"><path d="M1.500 14.500 13.500 2 25.500 14.500" fill="none" stroke="#fff" stroke-width="2.800"/></svg>
    <svg class="cloud" viewBox="0 0 41 27"><circle cx="20" cy="11" r="11" fill="#8c8c8a"/><circle cx="10" cy="16" r="10" fill="#b8b8b6"/><circle cx="31" cy="18" r="9.500" fill="#dadada"/><path d="M3 22 22 12 40 22Q38 27 32 27H9Q5 27 3 22Z" fill="#fff"/></svg>
    <div class="lang"><span>ENG</span><span>US</span></div>
    <svg class="wifi" viewBox="0 0 40 30" fill="none" stroke="#fff" stroke-width="2.800"><path d="M1 12Q20 -8 39 12M7 17.500Q20 4 33 17.500M12.500 22.500Q20 14.500 27.500 22.500"/><circle cx="20" cy="26.500" r="3" fill="#fff" stroke="none"/></svg>
    <svg class="vol" viewBox="0 0 40 34" fill="none" stroke="#fff" stroke-width="2.400"><path d="M1.500 11H7L16 3.500V30.500L7 23H1.500Z" stroke-linejoin="round"/><path d="M21 12Q25 17 21 22"/><path d="M26 7Q34 17 26 27M30 2Q43 17 30 32" stroke="#6a6a68"/></svg>
    <svg class="bat" viewBox="0 0 40 28"><rect x="1.500" y="1.500" width="33" height="25" rx="5" fill="none" stroke="#fff" stroke-width="2.400"/><rect x="5" y="6" width="10" height="16" rx="2" fill="#fff"/><path d="M36 9Q40 9 40 14T36 19Z" fill="#fff"/></svg>
    <div class="clock"><span>4:43 PM</span><span>4/04/2023</span></div>
  </div>
</div>
</body>
</html>
```

FILE: styles.css
```css
* { box-sizing: border-box; }
body { margin: 0; width: 3840px; height: 2160px; overflow: hidden; display: flex; flex-direction: column; background: #e2e9f1; color: #000; font-family: "Liberation Sans", Arial, sans-serif; font-size: 27px; }
svg { display: block; overflow: visible; }
.defs { position: absolute; }

.titlebar { height: 56px; flex: none; display: flex; align-items: center; padding-left: 3px; background: linear-gradient(90deg, #f3f2ef 0, #f4f2ee 500px, #f7f0ec 1050px, #f6f1ea 1800px, #f5f3eb 2800px); font-family: "Open Sans", "Noto Sans", sans-serif; }
.app-icon { width: 38px; height: 28px; margin-right: 4px; }
.title { font-size: 28px; letter-spacing: .24px; line-height: 56px; padding-top: 1px; white-space: nowrap; }
.win-buttons { margin-left: auto; display: flex; gap: 96px; padding-right: 51px; }
.win-buttons svg { width: 20px; height: 20px; }

.menubar { height: 49px; flex: none; background: #fff; border-bottom: 2px solid #f0f0f0; display: grid; grid-template-columns: 80px 87px 101px 90px 128px 117px 125px 128px 154px 130px 100px; padding-left: 18px; padding-top: 3px; font: 28px/44px "Open Sans", "Noto Sans", sans-serif; letter-spacing: .3px; }

.toolbars { height: 47px; flex: none; display: flex; gap: 5px; background: linear-gradient(90deg, #e2e9f1, #eaf1fa 3000px); }
.group { display: flex; align-items: center; padding: 0 2px 1px 11px; background: linear-gradient(#e4f1f9, #d3e8f5 50%, #bddcee 78%, #a9cadd); border-right: 1px solid #a9c6d8; position: relative; }
.group:nth-child(2) { padding-right: 1px; }
.group:nth-child(3) { padding-left: 10px; }
.group.last { padding-left: 9px; }
.group::before, .sgroup::before { content: ""; position: absolute; left: 4px; top: 2px; bottom: 1px; border-left: 2px dotted #9fb2c0; }
.cell { width: 44px; height: 42px; display: flex; align-items: center; justify-content: center; }
.cell svg { width: 32px; height: 32px; }
.pressed { border: 1px solid #6fa3c3; background: linear-gradient(#a9cadd, #cbe3f1); }
.sep { width: 8px; height: 38px; background: linear-gradient(90deg, transparent 3px, #9aabb8 3px 4px, #fff 4px 5px, transparent 5px); }
.t-dollar { font: bold 24px "Liberation Sans", sans-serif; fill: #8a8a00; }
.t-bits { font: bold 14px "Liberation Mono", monospace; fill: #1010c0; }
.t-help { font: bold 26px "Liberation Sans", sans-serif; fill: #fff; text-anchor: middle; }
.t-tag { font: bold 17px "Liberation Sans", sans-serif; fill: #888; }
.t-lbl { font: 14.5px "Liberation Sans", sans-serif; fill: #1818d0; }
.t-serif { font: 36px "Liberation Serif", serif; text-anchor: middle; }

.tabs { height: 58px; flex: none; display: flex; background: linear-gradient(90deg, #e2e9f1, #eaf1fa 3000px); }
.tab { width: 408px; height: 58px; position: relative; display: flex; align-items: center; padding: 5px 0 0 40px; }
.tab > * { position: relative; }
.tab .tab-shape { position: absolute; left: 0; top: 0; width: 408px; height: 59px; z-index: 0; overflow: hidden; }
.tab-icon { width: 32px; height: 40px; }
.tab-label { font-size: 29px; color: #1e4c70; margin-left: 12px; width: 274px; white-space: nowrap; padding-top: 1px; letter-spacing: .1px; }
.tab-close { width: 32px; height: 32px; }
.band { height: 7px; flex: none; border-top: 1px solid #6fa3c3; background: linear-gradient(#bcd8ea, #a9c8dc); }

.work { height: 1777px; flex: none; display: flex; background: #a9c8dc; padding-right: 4px; }
.toolbox { width: 50px; background: #e2e9f1; }
.tools { width: 50px; padding-left: 2px; background: linear-gradient(90deg, #e6f2f9, #cfe5f3 60%, #b4d8ed); border-bottom: 1px solid #a9c8dc; position: relative; }
.tools::before { content: ""; position: absolute; left: 0; right: 0; top: 3px; border-top: 3px dotted #b0c0cc; }
.main-tools { padding-top: 11px; height: 946px; }
.rot-tools { padding-top: 13px; margin-top: 4px; height: 225px; }
.tool { width: 44px; height: 42px; display: flex; align-items: center; justify-content: center; }
.tool svg { width: 32px; height: 30px; }
.hsep { display: block; height: 4px; margin-left: 2px; width: 44px; background: linear-gradient(transparent 1px, #999 1px 2px, #fff 2px 3px, transparent 3px); }
.angle { display: block; width: 46px; height: 34px; background: #fff; border: 1px solid #000; border-width: 1px 0 0 1px; font-size: 27px; line-height: 34px; padding-left: 1px; margin: -1px 0 3px; }

.side { width: 239px; display: flex; flex-direction: column; gap: 4px; }
.overview { width: 239px; height: 101px; background: #dfe0d0; border: 1px solid #666; overflow: hidden; }
.selector { flex: none; height: 1670px; border: 1px solid #666; display: flex; flex-direction: column; }
.selector-head { height: 43px; text-align: center; line-height: 42px; padding-top: 2px; letter-spacing: .2px; background: linear-gradient(#e8f3fa, #c9e1f0 60%, #a9cadd); }
.devices { flex: 1; margin: 0; padding: 0 2px 0 0; list-style: none; background: #fff; border: 1px solid #0a6cc0; border-bottom: 0; overflow: hidden; letter-spacing: .3px; }
.devices li { height: 31px; line-height: 33px; padding-left: 2px; white-space: nowrap; overflow: hidden; }
.devices .selected { background: #0078d7; color: #fff; margin-right: -2px; }
.hscroll { height: 43px; background: #f0f0f0; border: 1px solid #0a6cc0; border-width: 0 1px 2px; padding: 7px 0 0 43px; }
.thumb { width: 110px; height: 27px; background: #858585; }

.editor { width: 3543px; height: 1775px; margin-left: 4px; background: #dfe0d0; border: 1px solid #666; box-shadow: 0 2px #dce6ee; }
.sheet { width: 3541px; height: 1773px; overflow: hidden; }
.border { fill: none; stroke: #0000c8; stroke-width: 1; }
.wire { fill: none; stroke: #004000; stroke-width: 6; stroke-linejoin: round; }
.part { fill: #c8c8aa; stroke: #800000; stroke-width: 6; stroke-linejoin: round; }
.node { fill: #004000; }
.sign { fill: none; stroke: #800000; stroke-width: 2; }
.lcd { fill: #004000; stroke: #00ff00; stroke-width: 3; }
.lcd-text { font-size: 31px; fill: #00ff00; }
.unit { font-size: 28px; font-style: italic; fill: #800000; }
.ref { font-size: 45px; }
.val { font-size: 31px; }

.status { height: 46px; flex: none; display: flex; gap: 4px; background: #e2e9f1; line-height: 46px; white-space: pre; }
.status span { padding-top: 1px; }
.sgroup { position: relative; display: flex; align-items: center; background: linear-gradient(#e4f1f9, #d3e8f5 50%, #bddcee 82%, #a9cadd); border-right: 1px solid #a9c6d8; }
.sim { width: 457px; }
.sim-icons { width: 220px; height: 46px; }
.ssep { width: 14px; height: 38px; background: linear-gradient(90deg, transparent 2px, #999 2px 3px, #fff 3px 4px, transparent 4px); }
.info { width: 32px; height: 32px; margin-right: 14px; }
.anim { width: 414px; padding-left: 14px; color: #004000; overflow: hidden; }
.anim span { width: 398px; overflow: hidden; flex: none; letter-spacing: .15px; }
.coords { flex: 1; padding-left: 16px; border: 0; }
.c1 { width: 65px; } .c2 { width: 110px; } .c3 { width: 66px; }
.coords .th { margin-left: auto; padding-right: 4px; color: #000080; }

.taskbar { height: 120px; flex: none; border-top: 3px solid #444442; display: flex; align-items: center; padding: 0 0 3px 53px; color: #fff; font: 28px/40px "Open Sans", "Noto Sans", sans-serif; background: linear-gradient(90deg, #20221f 0, #22231e 200px, #2a221c 400px, #21221e 620px, #20221f 1400px, #29221b 1720px, #21221f 1960px, #22231e 2400px, #20201f 2900px, #272219 3180px, #21221f 3450px, #20221f); }
.weather { width: 952px; display: flex; align-items: center; }
.weather > svg { width: 50px; height: 50px; margin-top: -3px; }
.lines, .lang, .clock { display: flex; flex-direction: column; margin-top: -1px; }
.lines { margin-left: 23px; align-items: flex-start; }
.dim { color: #ccccca; }
.start { width: 58px; height: 58px; margin-top: 2px; }
.search { width: 550px; height: 80px; margin-left: 34px; border-radius: 40px; background: #3b3a38; border: 2px solid #343431; display: flex; align-items: center; padding-left: 28px; font-size: 32.5px; color: #d4d4d2; }
.mag { width: 36px; height: 36px; margin-right: 27px; }
.brush { width: 126px; height: 56px; margin-left: auto; margin-right: 8px; }
.apps { display: flex; margin-left: 4px; }
.app { width: 110px; height: 100px; position: relative; display: flex; align-items: center; justify-content: center; }
.app svg { width: 60px; height: 60px; }
.app svg.wide { width: 76px; height: 76px; }
.app.run::after, .app.active::after { content: ""; position: absolute; left: 47px; bottom: 3px; width: 16px; height: 8px; border-radius: 4px; background: #9c9b99; }
.app.active::before { content: ""; position: absolute; left: 5px; top: 0; width: 100px; height: 100px; border-radius: 9px; background: #2e2f2d; border: 2px solid #363735; }
.app.active::after { left: 35px; width: 40px; background: #f4806a; }
.app.active svg { position: relative; }
.t-my { font: 23px "Open Sans", sans-serif; fill: #fff; }
.t-hp { font: italic bold 27px "Open Sans", sans-serif; fill: #fff; }
.t-badge { font: 22px "Open Sans", sans-serif; fill: #fff; }
.tray { margin-left: 338px; display: flex; align-items: center; flex: 1; padding-right: 39px; }
.chev { width: 27px; height: 16px; }
.cloud { width: 41px; height: 27px; margin-left: 46px; }
.lang { width: 70px; margin-left: 39px; align-items: center; font-size: 27px; line-height: 39px; padding-top: 4px; }
.wifi { width: 40px; height: 30px; margin-left: 41px; }
.vol { width: 40px; height: 34px; margin-left: 20px; }
.bat { width: 40px; height: 28px; margin-left: 20px; }
.clock { margin-left: auto; align-items: flex-end; letter-spacing: .2px; }
```
